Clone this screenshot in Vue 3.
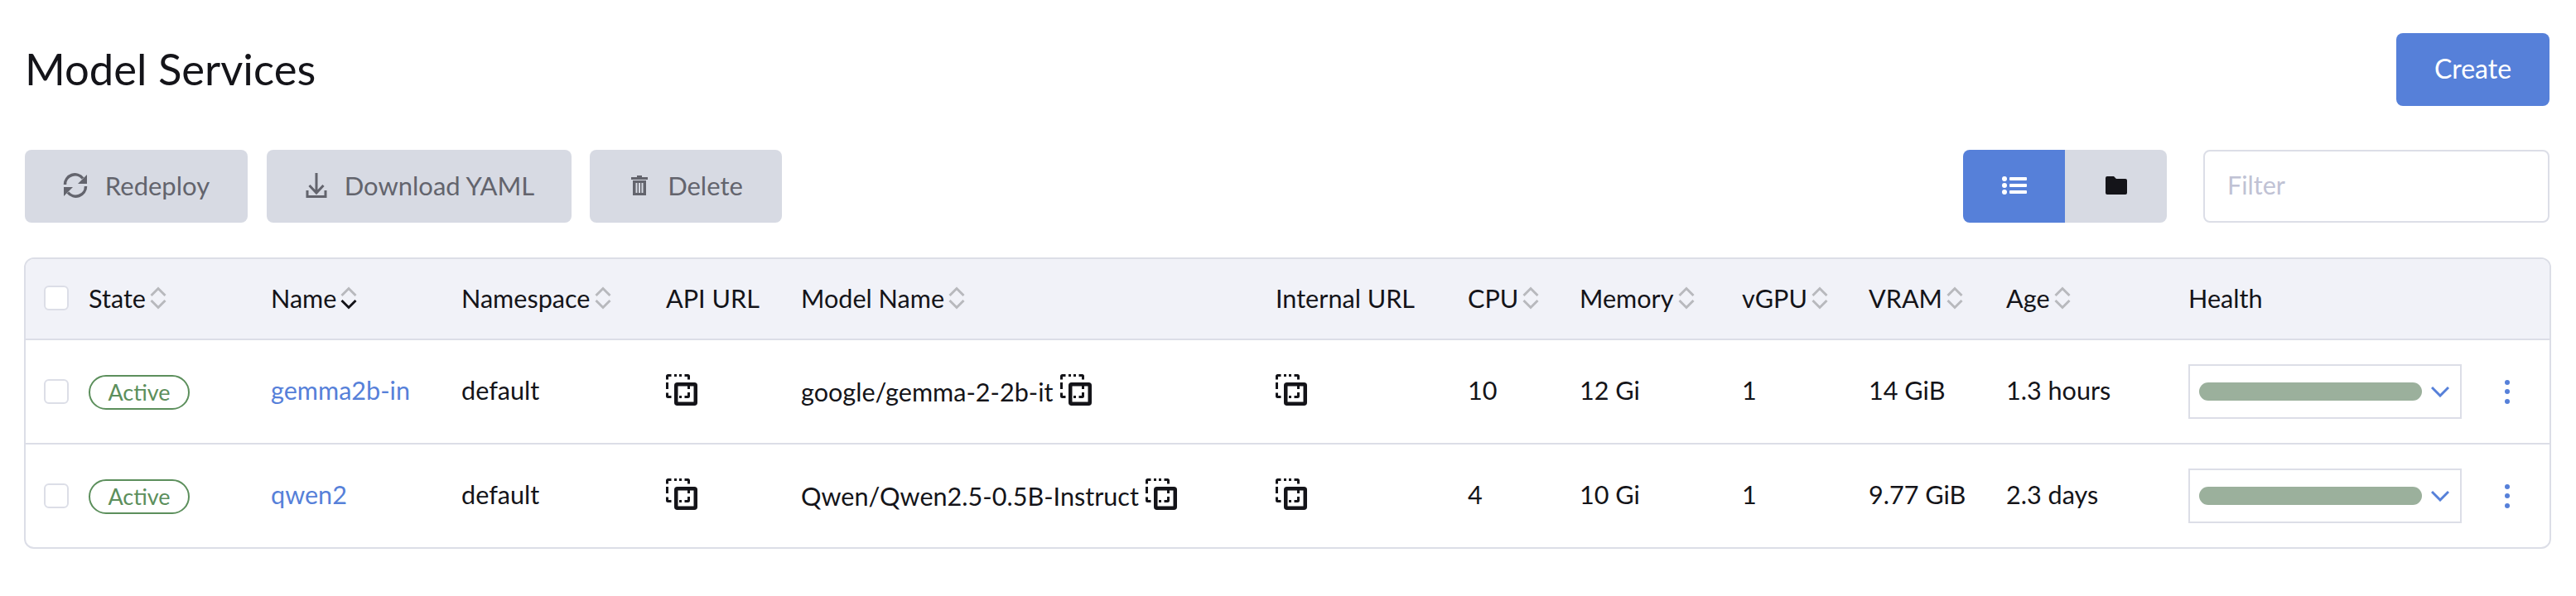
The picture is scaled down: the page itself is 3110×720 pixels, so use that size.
<script setup>
const columns = [
  { label: 'State', sort: true, width: 220 },
  { label: 'Name', sort: true, active: true, width: 230 },
  { label: 'Namespace', sort: true, width: 247 },
  { label: 'API URL', width: 163 },
  { label: 'Model Name', sort: true, width: 573 },
  { label: 'Internal URL', width: 232 },
  { label: 'CPU', sort: true, width: 135 },
  { label: 'Memory', sort: true, width: 196 },
  { label: 'vGPU', sort: true, width: 153 },
  { label: 'VRAM', sort: true, width: 166 },
  { label: 'Age', sort: true, width: 220 },
  { label: 'Health', width: 358 }
]

const rows = [
  { name: 'gemma2b-in', namespace: 'default', model: 'google/gemma-2-2b-it', cpu: '10', memory: '12 Gi', vgpu: '1', vram: '14 GiB', age: '1.3 hours' },
  { name: 'qwen2', namespace: 'default', model: 'Qwen/Qwen2.5-0.5B-Instruct', cpu: '4', memory: '10 Gi', vgpu: '1', vram: '9.77 GiB', age: '2.3 days' }
]

// dashed back square of the copy icon
const copyDash = 'M1.5 6.5v-4a1 1 0 0 1 1-1h4M10 1.5h3M16 1.500h3M22.500 1.500h4a1 1 0 0 1 1 1v4M27.500 10v8M27.500 22v4.500a1 1 0 0 1-1 1h-4M19 27.500h-3M13 27.500h-3M6.500 27.500h-4a1 1 0 0 1-1-1v-4M1.500 18v-8'
</script>

<template>
  <div class="page">
    <header class="title-bar">
      <h1>Model Services</h1>
      <button class="btn primary create">Create</button>
    </header>

    <div class="toolbar">
      <div class="actions">
        <button class="btn muted redeploy">
          <svg class="btn-icon" width="30" height="30" viewBox="0 0 30 30" fill="none" stroke="#63646d" stroke-width="3.500">
            <path d="M2.500 14A12 12 0 0 1 24 6.500" />
            <path d="M27.500 16A12 12 0 0 1 6 23.500" />
            <path d="M29 2v11H18z" fill="#63646d" stroke="none" />
            <path d="M1 28V17h11z" fill="#63646d" stroke="none" />
          </svg>
          Redeploy
        </button>
        <button class="btn muted download">
          <svg class="btn-icon" width="26" height="30" viewBox="0 0 26 30" fill="none" stroke="#63646d" stroke-width="3">
            <path d="M13 0v24M4.500 15 13 24l8.500-9" />
            <path d="M2 21v7.500h22V21" />
          </svg>
          Download YAML
        </button>
        <button class="btn muted delete">
          <svg class="btn-icon" width="20" height="24" viewBox="0 0 20 24" fill="#63646d">
            <path d="M7 0h6v2h7v3H0V2h7z" />
            <path fill-rule="evenodd" d="M2 6h16v18H2zM5.500 9v12h2V9zM9 9v12h2V9zM12.500 9v12h2V9z" />
          </svg>
          Delete
        </button>
      </div>

      <div class="view-filter">
        <div class="toggle">
          <button class="toggle-btn on">
            <svg width="30" height="22" viewBox="0 0 30 22" fill="#fff">
              <circle cx="3" cy="3" r="3" />
              <circle cx="3" cy="11" r="3" />
              <circle cx="3" cy="19" r="3" />
              <rect x="9" y="1" width="21" height="4" rx="1" />
              <rect x="9" y="9" width="21" height="4" rx="1" />
              <rect x="9" y="17" width="21" height="4" rx="1" />
            </svg>
          </button>
          <button class="toggle-btn">
            <svg width="26" height="22" viewBox="0 0 26 22" fill="#141419">
              <path d="M2 0h8l3 3h11a2 2 0 0 1 2 2v15a2 2 0 0 1-2 2H2a2 2 0 0 1-2-2V2a2 2 0 0 1 2-2z" />
            </svg>
          </button>
        </div>
        <input class="filter" type="text" placeholder="Filter" />
      </div>
    </div>

    <div class="table-wrap">
      <table>
        <colgroup>
          <col class="col-check" />
          <col v-for="col in columns" :key="col.label" :style="{ width: col.width + 'px' }" />
          <col />
        </colgroup>
        <thead>
          <tr>
            <th class="check-cell"><span class="check"></span></th>
            <th v-for="col in columns" :key="col.label">
              <span class="th-inner">
                {{ col.label }}
                <svg v-if="col.sort" class="sort" width="20" height="30" viewBox="0 0 20 30" fill="none" stroke-width="3">
                  <path d="M1.500 12 10 3.500l8.500 8.500" stroke="#b8b9bd" />
                  <path d="M1.500 18l8.500 8.500 8.500-8.500" :stroke="col.active ? '#141419' : '#b8b9bd'" />
                </svg>
              </span>
            </th>
            <th></th>
          </tr>
        </thead>
        <tbody>
          <tr v-for="row in rows" :key="row.name">
            <td class="check-cell"><span class="check"></span></td>
            <td><span class="badge">Active</span></td>
            <td class="text"><a class="link">{{ row.name }}</a></td>
            <td class="text">{{ row.namespace }}</td>
            <td>
              <svg class="copy" width="38" height="38" viewBox="0 0 38 38" fill="none" stroke="#141419">
                <path :d="copyDash" stroke-width="3" />
                <rect x="12.250" y="12.250" width="23.500" height="23.500" rx="1.500" stroke-width="4.500" />
              </svg>
            </td>
            <td>
              <span class="model">
                {{ row.model }}
                <svg class="copy" width="38" height="38" viewBox="0 0 38 38" fill="none" stroke="#141419">
                  <path :d="copyDash" stroke-width="3" />
                  <rect x="12.250" y="12.250" width="23.500" height="23.500" rx="1.500" stroke-width="4.500" />
                </svg>
              </span>
            </td>
            <td>
              <svg class="copy" width="38" height="38" viewBox="0 0 38 38" fill="none" stroke="#141419">
                <path :d="copyDash" stroke-width="3" />
                <rect x="12.250" y="12.250" width="23.500" height="23.500" rx="1.500" stroke-width="4.500" />
              </svg>
            </td>
            <td class="text">{{ row.cpu }}</td>
            <td class="text">{{ row.memory }}</td>
            <td class="text">{{ row.vgpu }}</td>
            <td class="text">{{ row.vram }}</td>
            <td class="text">{{ row.age }}</td>
            <td>
              <div class="health">
                <span class="bar"></span>
                <svg width="22" height="14" viewBox="0 0 22 14" fill="none" stroke="#5680d9" stroke-width="3">
                  <path d="M1 2l10 10L21 2" />
                </svg>
              </div>
            </td>
            <td class="menu-cell">
              <span class="dots"><i></i><i></i><i></i></span>
            </td>
          </tr>
        </tbody>
      </table>
    </div>
  </div>
</template>

<style>
body {
  background: #fff;
}
</style>

<style scoped>
.page {
  padding: 40px 32px 0 30px;
  font-family: Lato, "Liberation Sans", sans-serif;
  font-size: 30.6px;
  color: #141419;
}

.title-bar {
  display: flex;
  justify-content: space-between;
  align-items: center;
  height: 88px;
}

h1 {
  margin: 0 0 3px;
  font-size: 52.6px;
  font-weight: 400;
}

.btn {
  display: inline-flex;
  align-items: center;
  justify-content: center;
  box-sizing: border-box;
  height: 88px;
  padding: 0 0 3px;
  border: 0;
  border-radius: 8px;
  font: inherit;
  font-size: 31px;
}

.primary {
  background: #5680d9;
  color: #fff;
}

.create {
  width: 185px;
  font-size: 32px;
}

.muted {
  background: #d7dae3;
  color: #63646d;
}

.redeploy {
  width: 269px;
}

.download {
  width: 368px;
  padding-left: 3px;
}

.delete {
  width: 232px;
  padding-left: 3px;
}

.btn-icon {
  margin-right: 21px;
}

.delete .btn-icon {
  margin-right: 24px;
}

.toolbar {
  display: flex;
  justify-content: space-between;
  margin-top: 53px;
}

.actions {
  display: flex;
  gap: 22.5px;
}

.view-filter {
  display: flex;
  gap: 44px;
}

.toggle {
  display: flex;
  border-radius: 8px;
  overflow: hidden;
}

.toggle-btn {
  display: flex;
  align-items: center;
  justify-content: center;
  box-sizing: border-box;
  width: 123px;
  height: 88px;
  padding: 0 0 3px;
  border: 0;
  background: #d7dae3;
}

.toggle-btn.on {
  background: #5680d9;
}

.filter {
  box-sizing: border-box;
  width: 418px;
  height: 88px;
  padding: 0 27px 3px;
  border: 2px solid #dcdee7;
  border-radius: 8px;
  font: inherit;
  outline: none;
}

.filter::placeholder {
  color: #c0c2d4;
}

.table-wrap {
  margin: 42px -2px 0 -1px;
  border: 2px solid #dcdee7;
  border-radius: 12px;
  overflow: hidden;
}

table {
  width: 100%;
  border-collapse: collapse;
  table-layout: fixed;
}

.col-check {
  width: 76px;
}

th {
  height: 94px;
  padding: 0 0 2px;
  background: #f1f2f8;
  font-weight: 400;
  text-align: left;
  border-bottom: 2px solid #dcdee7;
}

td {
  height: 124px;
  padding: 0;
  white-space: nowrap;
}

td.text {
  height: 121px;
  padding-bottom: 3px;
}

tbody tr + tr td {
  border-top: 2px solid #dcdee7;
}

th.check-cell,
td.check-cell {
  padding-left: 22px;
}

.check {
  display: block;
  box-sizing: border-box;
  width: 30px;
  height: 30px;
  background: #fff;
  border: 2px solid #dcdee7;
  border-radius: 6px;
}

.th-inner {
  display: inline-flex;
  align-items: center;
  gap: 5px;
}

.sort {
  flex: none;
}

.badge {
  display: inline-block;
  box-sizing: border-box;
  width: 122px;
  height: 42px;
  border: 2px solid #5c8f5c;
  border-radius: 21px;
  color: #5c8f5c;
  font-size: 27px;
  line-height: 37px;
  text-align: center;
  vertical-align: middle;
}

.link {
  color: #5680d9;
}

.copy {
  display: block;
  margin-top: -4px;
}

.model {
  display: inline-flex;
  align-items: center;
  gap: 8px;
}

.health {
  display: flex;
  align-items: center;
  box-sizing: border-box;
  width: 330px;
  height: 66px;
  padding: 0 13px 0 11px;
  border: 2px solid #dcdee7;
}

.bar {
  width: 269px;
  height: 22px;
  margin-right: 11px;
  background: #9bb09c;
  border-radius: 11px;
}

.menu-cell {
  padding-left: 24px;
}

.dots {
  display: flex;
  flex-direction: column;
  gap: 5.5px;
  width: 6px;
}

.dots i {
  width: 6px;
  height: 6px;
  background: #5680d9;
  border-radius: 50%;
}
</style>
